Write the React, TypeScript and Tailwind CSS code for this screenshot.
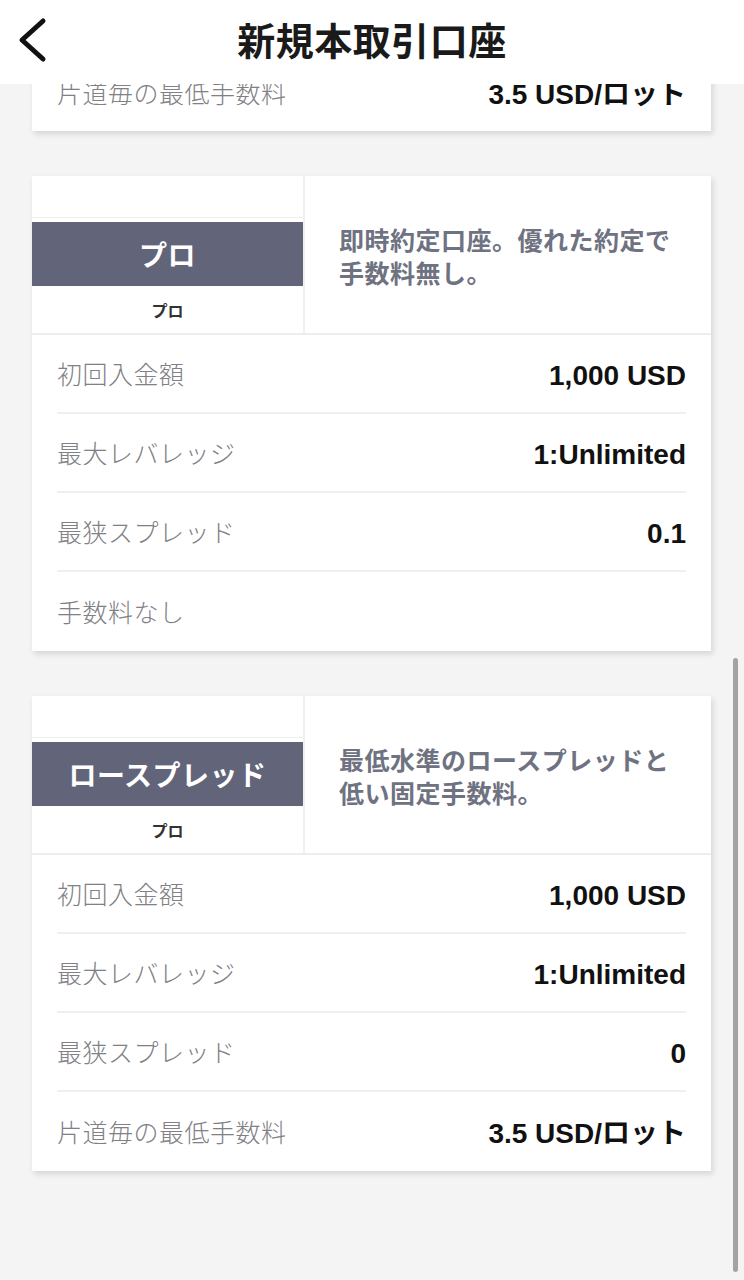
import React from "react";

const JP = '"Noto Sans CJK JP", "Noto Sans", sans-serif';
const NUM = '"Liberation Sans", "Noto Sans CJK JP", sans-serif';

type Row = { label: string; value?: string };

function Rows({ rows }: { rows: Row[] }) {
  return (
    <div className="px-[25px]">
      {rows.map((r, i) => (
        <div
          key={i}
          className={`flex h-[79px] items-center justify-between ${
            i < rows.length - 1 ? "border-b-2 border-[#efefef]" : ""
          }`}
        >
          <span className="text-[25px] font-light tracking-[0.5px] text-[#808085]" style={{ fontFamily: JP }}>
            {r.label}
          </span>
          {r.value && (
            <span className="mt-[4px] text-[28px] font-bold text-[#111111]" style={{ fontFamily: NUM }}>
              {r.value}
            </span>
          )}
        </div>
      ))}
    </div>
  );
}

function Card({ title, lines, rows }: { title: string; lines: string[]; rows: Row[] }) {
  return (
    <div className="bg-white shadow-[2px_3px_6px_rgba(0,0,0,0.13)]">
      <div className="flex h-[159px] border-b-2 border-[#eeeeee]">
        <div className="flex w-[273px] flex-col border-r-2 border-[#f0f0f0]">
          <div className="h-[42px] border-b border-[#efefef]" />
          <div className="mt-[4px] flex h-[64px] items-center justify-center bg-[#62657a]">
            <span className="text-[28px] font-bold tracking-[0.5px] text-white" style={{ fontFamily: JP }}>
              {title}
            </span>
          </div>
          <div className="flex flex-1 items-center justify-center">
            <span className="text-[16px] font-bold text-[#333333]" style={{ fontFamily: JP }}>
              プロ
            </span>
          </div>
        </div>
        <div className="flex-1 pl-[34px] pt-[47px]">
          {lines.map((l, i) => (
            <div
              key={i}
              className="whitespace-nowrap text-[25px] font-semibold leading-[33px] tracking-[0.5px] text-[#6f7281]"
              style={{ fontFamily: JP }}
            >
              {l}
            </div>
          ))}
        </div>
      </div>
      <Rows rows={rows} />
    </div>
  );
}

export default function App() {
  return (
    <div className="relative h-[1280px] w-[744px] overflow-hidden bg-[#f4f4f4]">
      <div className="absolute left-0 top-0 z-10 flex h-[84px] w-full items-center justify-center bg-white pb-[8px]">
        <svg
          className="absolute left-[14px] top-[16px]"
          width="36"
          height="48"
          viewBox="0 0 36 48"
          fill="none"
        >
          <path d="M29 5 L8 24 L29 43" stroke="#111" strokeWidth="5" strokeLinecap="round" strokeLinejoin="round" />
        </svg>
        <span className="text-[38px] font-bold tracking-[0.5px] text-[#1a1a1a]" style={{ fontFamily: JP }}>
          新規本取引口座
        </span>
      </div>

      <div className="flex flex-col gap-[45px] pl-[32px] pr-[33px] pt-[53px]">
        <div className="bg-white shadow-[2px_3px_6px_rgba(0,0,0,0.13)]">
          <div className="h-[78px]">
            <Rows rows={[{ label: "片道毎の最低手数料", value: "3.5 USD/ロット" }]} />
          </div>
        </div>

        <Card
          title="プロ"
          lines={["即時約定口座。優れた約定で", "手数料無し。"]}
          rows={[
            { label: "初回入金額", value: "1,000 USD" },
            { label: "最大レバレッジ", value: "1:Unlimited" },
            { label: "最狭スプレッド", value: "0.1" },
            { label: "手数料なし" },
          ]}
        />

        <Card
          title="ロースプレッド"
          lines={["最低水準のロースプレッドと", "低い固定手数料。"]}
          rows={[
            { label: "初回入金額", value: "1,000 USD" },
            { label: "最大レバレッジ", value: "1:Unlimited" },
            { label: "最狭スプレッド", value: "0" },
            { label: "片道毎の最低手数料", value: "3.5 USD/ロット" },
          ]}
        />
      </div>

      <div className="absolute left-[733px] top-[658px] h-[614px] w-[5px] rounded-full bg-[#a3a3a3]" />
    </div>
  );
}
